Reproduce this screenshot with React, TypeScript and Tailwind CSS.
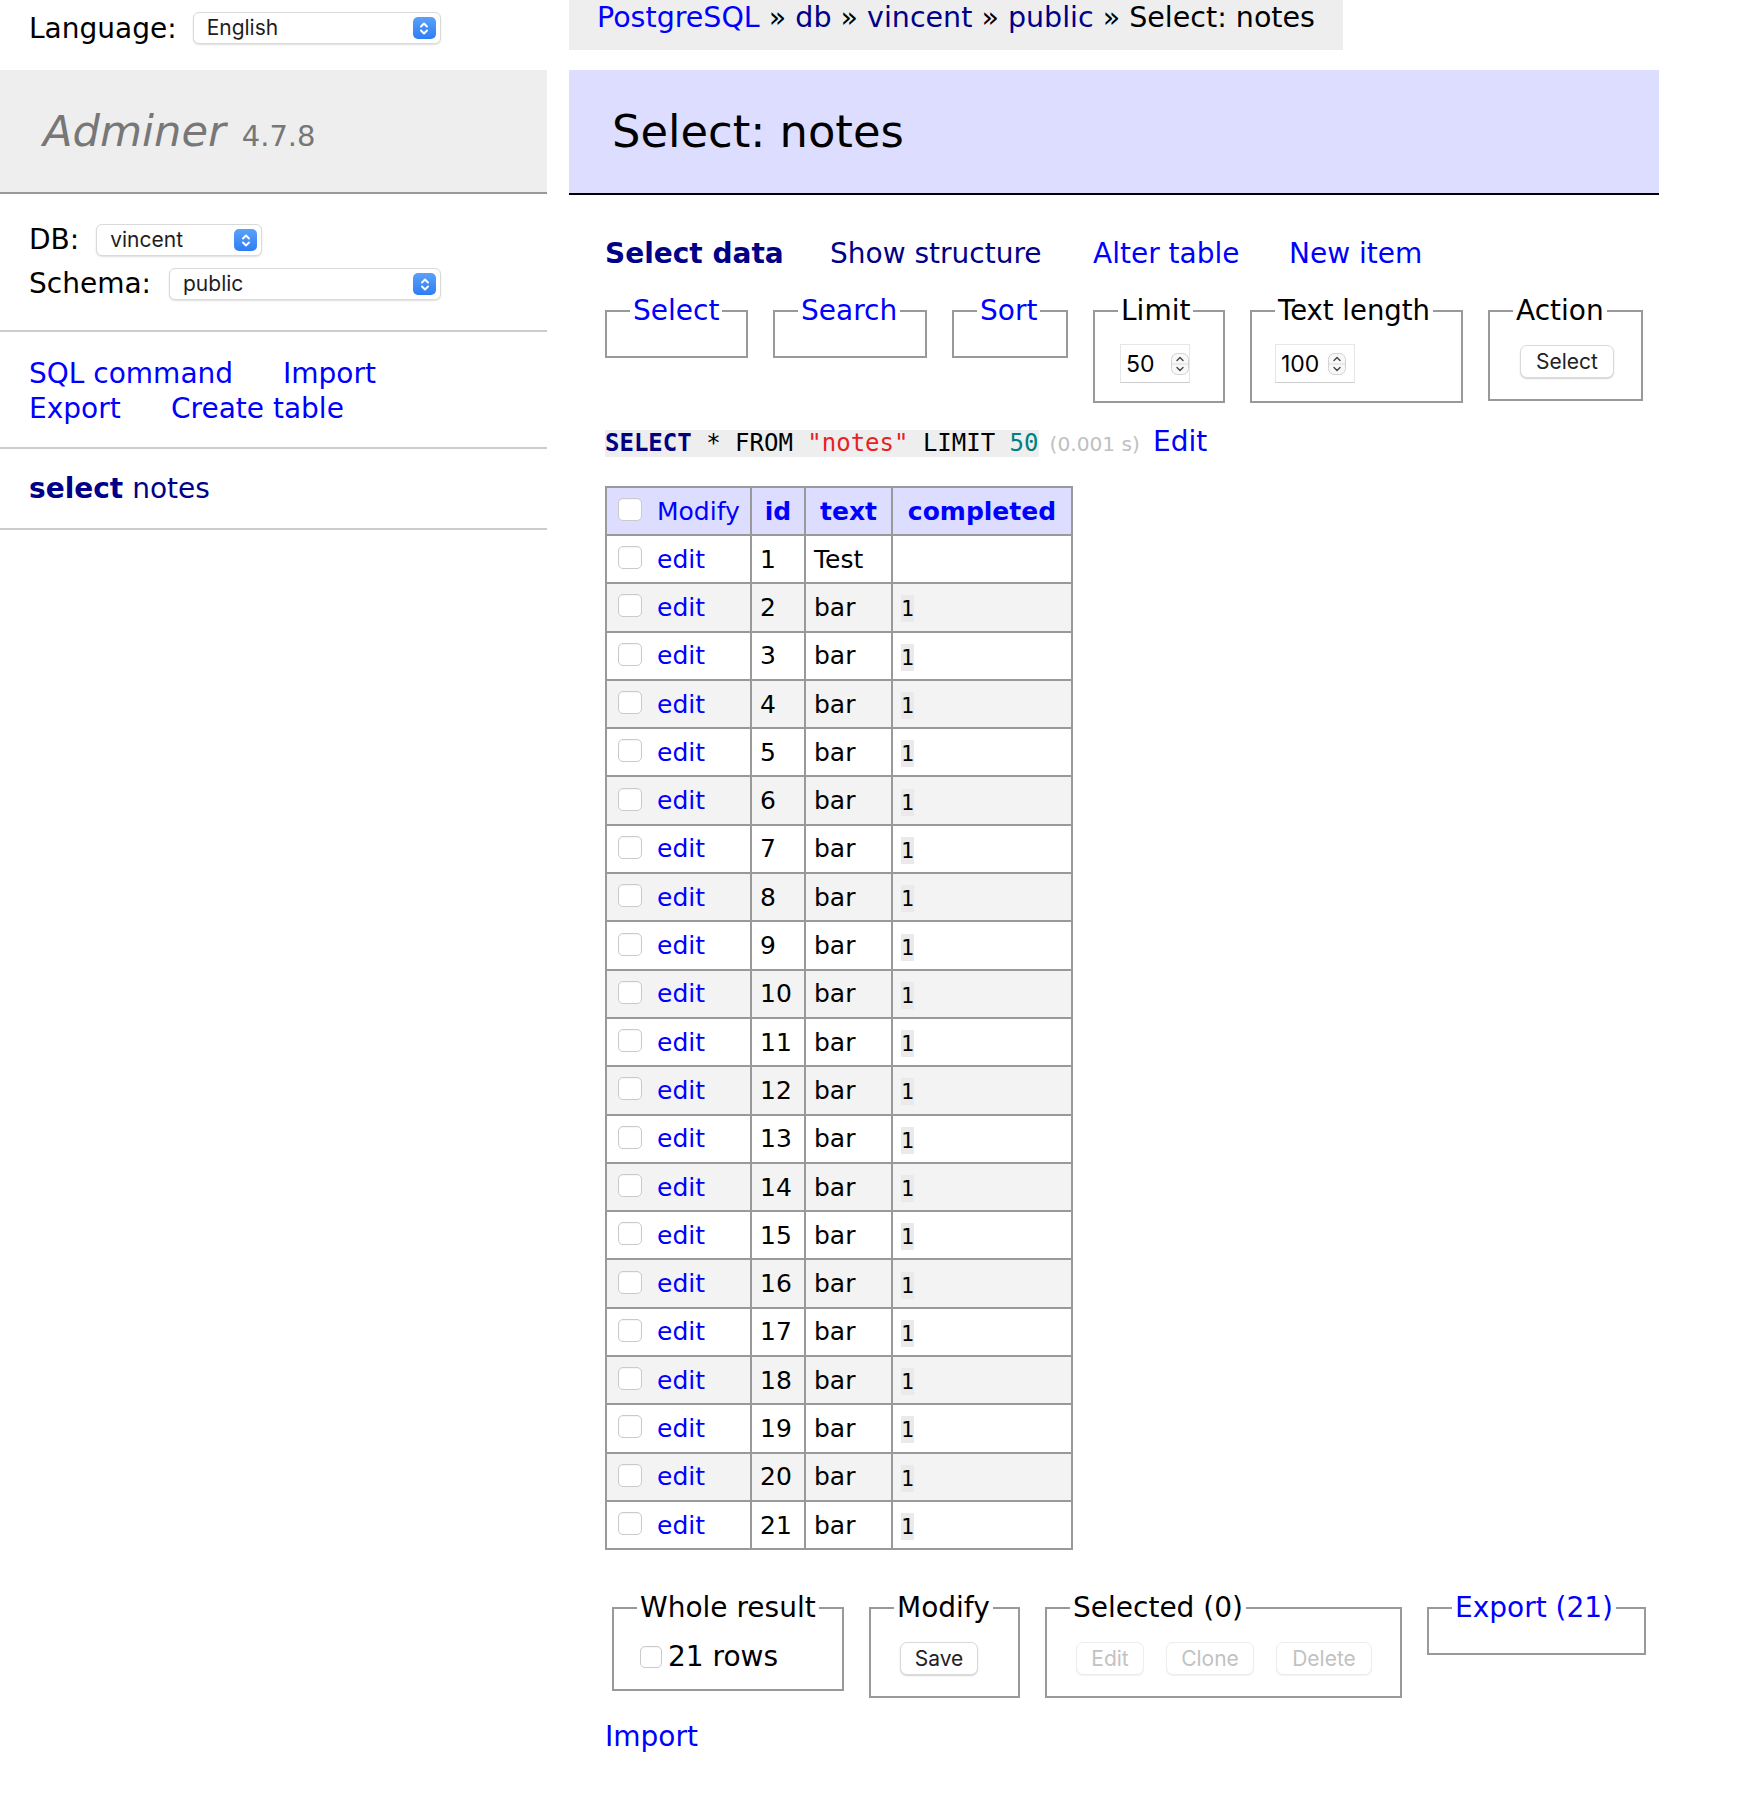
import React from "react";

function SelectArrows() {
  return (
    <span className="ml-auto flex h-[22px] w-[23px] shrink-0 items-center justify-center rounded-[5px] bg-linear-to-b from-[#5aa1f9] to-[#2d7df5]">
      <svg width="10" height="15" viewBox="0 0 10 15" fill="none" stroke="white" strokeWidth="1.9" strokeLinecap="round" strokeLinejoin="round">
        <path d="M2 5.5 L5 2.5 L8 5.5" />
        <path d="M2 9.5 L5 12.5 L8 9.5" />
      </svg>
    </span>
  );
}

function MacSelect({ value, className }: { value: string; className: string }) {
  return (
    <div
      className={`flex h-[32px] items-center rounded-[6px] border border-[#dadada] bg-white pl-[13px] pr-[4px] font-['Inter',sans-serif] text-[21px] leading-[26px] text-[#1e1e1e] shadow-[0_1px_2px_rgba(0,0,0,0.13)] ${className}`}
    >
      <span>{value}</span>
      <SelectArrows />
    </div>
  );
}

function Spinner() {
  return (
    <svg width="18" height="22" viewBox="0 0 18 22" className="shrink-0">
      <rect x="0.5" y="0.5" width="17" height="21" rx="6" fill="#f8f8f8" stroke="#d2d2d2" />
      <line x1="1" y1="11" x2="17" y2="11" stroke="#dcdcdc" />
      <path d="M6 7.5 L9 4.5 L12 7.5" fill="none" stroke="#444" strokeWidth="1.4" strokeLinecap="round" strokeLinejoin="round" />
      <path d="M6 14.5 L9 17.5 L12 14.5" fill="none" stroke="#444" strokeWidth="1.4" strokeLinecap="round" strokeLinejoin="round" />
    </svg>
  );
}

function NumInput({ value, className }: { value: string; className: string }) {
  return (
    <div
      className={`flex h-[39px] items-center border border-[#e6e6e6] border-b-[#cdcdcd] bg-white pl-[5px] font-['Inter',sans-serif] text-[23px] text-black ${className}`}
    >
      <span className="w-[47px]">{value}</span>
      <Spinner />
    </div>
  );
}

function MacButton({ label, disabled, className }: { label: string; disabled?: boolean; className: string }) {
  return (
    <div
      className={`flex h-[33px] items-center justify-center rounded-[7px] border bg-white font-['Inter',sans-serif] text-[21px] ${
        disabled
          ? "border-[#ededed] text-[#c2c2c2] shadow-[0_1px_1px_rgba(0,0,0,0.06)]"
          : "border-[#d9d9d9] text-[#222] shadow-[0_1px_1.5px_rgba(0,0,0,0.18)]"
      } ${className}`}
    >
      {label}
    </div>
  );
}

function Checkbox({ className }: { className: string }) {
  return (
    <span
      className={`inline-block h-[23px] w-[24px] shrink-0 rounded-[5px] border border-[#cacaca] bg-white shadow-[inset_0_1px_1px_rgba(0,0,0,0.04)] ${className}`}
    />
  );
}

const rows = Array.from({ length: 21 }, (_, i) => i + 1);

export default function App() {
  return (
    <div className="min-h-[1808px] w-[1754px] bg-white font-['DejaVu_Sans',Verdana,sans-serif] text-[28px] leading-[36px] text-black">
      <div className="flex items-start">
        {/* Sidebar */}
        <div className="w-[547px] shrink-0">
          <div className="h-[70px] pl-[29px] pt-[12px]">
            <div className="flex h-[32px] items-center gap-[16px]">
              <span className="mt-[2px]">Language:</span>
              <MacSelect value="English" className="w-[248px]" />
            </div>
          </div>
          <div className="flex h-[124px] items-center border-b-2 border-[#999] bg-[#eee] pl-[43px]">
            <div className="flex items-baseline text-[#777]">
              <span className="text-[43.2px] italic leading-[54px]">Adminer</span>
              <span className="ml-[16px] text-[29px]">4.7.8</span>
            </div>
          </div>
          <div className="border-b-2 border-[#ccc] px-[29px] pb-[24px] pt-[24px]">
            <div className="flex h-[44px] items-center gap-[17px]">
              <span>DB:</span>
              <MacSelect value="vincent" className="w-[166px]" />
            </div>
            <div className="flex h-[44px] items-center gap-[18px]">
              <span>Schema:</span>
              <MacSelect value="public" className="w-[272px]" />
            </div>
          </div>
          <div className="border-b-2 border-[#ccc] px-[29px] pb-[21px] pt-[25px] leading-[34.5px] text-[#0000ff]">
            <div className="flex">
              <span className="w-[254px]">SQL command</span>
              <span>Import</span>
            </div>
            <div className="flex">
              <span className="w-[142px]">Export</span>
              <span>Create table</span>
            </div>
          </div>
          <div className="border-b-2 border-[#ccc] px-[29px] pb-[21px] pt-[22px] text-[#000088]">
            <b>select</b> notes
          </div>
        </div>

        {/* Main */}
        <div className="ml-[22px] w-[1090px]">
          <div className="flex">
            <div className="h-[50px] whitespace-pre bg-[#eee] px-[28px] text-[28.5px] leading-[36px]">
              <span className="text-[#0000ff]">PostgreSQL</span>
              {" » "}
              <span className="text-[#000088]">db</span>
              {" » "}
              <span className="text-[#000088]">vincent</span>
              {" » "}
              <span className="text-[#000088]">public</span>
              {" » Select: notes"}
            </div>
          </div>
          <div className="mt-[20px] flex h-[125px] items-center border-b-2 border-black bg-[#ddf] pl-[43px] text-[44.8px] leading-[54px]">
            Select: notes
          </div>

          <div className="pl-[36px]">
            {/* tabs */}
            <div className="mt-[41px] flex h-[36px]">
              <span className="w-[225px] font-bold text-[#000088]">Select data</span>
              <span className="w-[263px] text-[#000088]">Show structure</span>
              <span className="w-[196px] text-[#0000ff]">Alter table</span>
              <span className="text-[#0000ff]">New item</span>
            </div>

            {/* fieldsets */}
            <div className="mt-[21px] flex items-start gap-[25px]">
              <fieldset className="w-[143px] border-2 border-[#999] px-[23px] py-[14px]">
                <legend className="px-[3px] leading-[35px] text-[#0000ff]">Select</legend>
              </fieldset>
              <fieldset className="w-[154px] border-2 border-[#999] px-[23px] py-[14px]">
                <legend className="px-[3px] leading-[35px] text-[#0000ff]">Search</legend>
              </fieldset>
              <fieldset className="w-[116px] border-2 border-[#999] px-[23px] py-[14px]">
                <legend className="px-[3px] leading-[35px] text-[#0000ff]">Sort</legend>
              </fieldset>
              <fieldset className="w-[132px] border-2 border-[#999] px-[23px] py-[14px]">
                <legend className="px-[3px] leading-[35px]">Limit</legend>
                <div className="h-[45px] pl-[2px] pt-[2px]">
                  <NumInput value="50" className="w-[70px]" />
                </div>
              </fieldset>
              <fieldset className="w-[213px] border-2 border-[#999] px-[23px] py-[14px]">
                <legend className="px-[3px] text-[27.5px] leading-[35px]">Text length</legend>
                <div className="h-[45px] pt-[2px]">
                  <NumInput value="100" className="w-[80px]" />
                </div>
              </fieldset>
              <fieldset className="w-[155px] border-2 border-[#999] px-[23px] py-[14px]">
                <legend className="px-[3px] leading-[35px]">Action</legend>
                <div className="h-[43px] pl-[7px] pt-[3px]">
                  <MacButton label="Select" className="w-[94px]" />
                </div>
              </fieldset>
            </div>

            {/* SQL */}
            <div className="mt-[21px] flex h-[36px] items-baseline whitespace-pre">
              <code className="inline-block bg-[#eee] font-['DejaVu_Sans_Mono',monospace] text-[24px] leading-[27px]">
                <span className="font-bold text-[#000080]">SELECT</span>
                {" * FROM "}
                <span className="text-[#e62222]">"notes"</span>
                {" LIMIT "}
                <span className="text-[#008080]">50</span>
              </code>
              <span className="ml-[11px] text-[20.2px] text-[#c0c0c0]">(0.001 s)</span>
              <span className="ml-[13px] text-[#0000ff]">Edit</span>
            </div>

            {/* Table */}
            <table className="mt-[26px] border-separate border-spacing-0 border-l-2 border-t-2 border-[#999] text-[25px] leading-[31px]">
              <thead>
                <tr className="bg-[#ddf]">
                  <td className="h-[48px] w-[145px] border-b-2 border-r-2 border-[#999] p-0">
                    <div className="flex items-center pl-[11px]">
                      <Checkbox className="-mt-[3px]" />
                      <span className="ml-[15px] text-[#0000ff]">Modify</span>
                    </div>
                  </td>
                  <th className="h-[48px] w-[54px] border-b-2 border-r-2 border-[#999] p-0 text-center font-bold text-[#0000ff]">id</th>
                  <th className="h-[48px] w-[87px] border-b-2 border-r-2 border-[#999] p-0 text-center font-bold text-[#0000ff]">text</th>
                  <th className="h-[48px] w-[180px] border-b-2 border-r-2 border-[#999] p-0 text-center font-bold text-[#0000ff]">completed</th>
                </tr>
              </thead>
              <tbody>
                {rows.map((n) => (
                  <tr key={n} className={n % 2 === 0 ? "bg-[#f3f3f3]" : "bg-white"}>
                    <td className="h-[48.3px] border-b-2 border-r-2 border-[#999] p-0">
                      <div className="flex items-center pl-[11px]">
                        <Checkbox className="-mt-[3px]" />
                        <span className="ml-[15px] text-[#0000ff]">edit</span>
                      </div>
                    </td>
                    <td className="h-[48.3px] border-b-2 border-r-2 border-[#999] py-0 pl-[8px] pr-[6px]">{n}</td>
                    <td className="h-[48.3px] border-b-2 border-r-2 border-[#999] py-0 pl-[8px] pr-[6px]">{n === 1 ? "Test" : "bar"}</td>
                    <td className="h-[48.3px] border-b-2 border-r-2 border-[#999] py-0 pl-[8px] pr-[6px]">
                      {n === 1 ? null : (
                        <code className="inline-block bg-[#eaeaea] align-middle font-['DejaVu_Sans_Mono',monospace] text-[21.4px] leading-[27px]">1</code>
                      )}
                    </td>
                  </tr>
                ))}
              </tbody>
            </table>

            {/* Bottom fieldsets */}
            <div className="ml-[7px] mt-[40px] flex items-start gap-[25px]">
              <fieldset className="w-[232px] border-2 border-[#999] px-[23px] py-[14px]">
                <legend className="px-[3px] leading-[35px]">Whole result</legend>
                <div className="flex h-[36px] items-center">
                  <Checkbox className="!h-[22px] !w-[22px] ml-[3px]" />
                  <span className="ml-[6px]">21 rows</span>
                </div>
              </fieldset>
              <fieldset className="w-[151px] border-2 border-[#999] px-[23px] py-[14px]">
                <legend className="px-[3px] leading-[35px]">Modify</legend>
                <div className="h-[43px] pl-[6px] pt-[3px]">
                  <MacButton label="Save" className="w-[78px]" />
                </div>
              </fieldset>
              <fieldset className="w-[357px] border-2 border-[#999] px-[23px] py-[14px]">
                <legend className="px-[3px] leading-[35px]">Selected (0)</legend>
                <div className="flex h-[43px] items-start gap-[22px] pl-[6px] pt-[3px]">
                  <MacButton label="Edit" disabled className="w-[68px]" />
                  <MacButton label="Clone" disabled className="w-[88px]" />
                  <MacButton label="Delete" disabled className="w-[96px]" />
                </div>
              </fieldset>
              <fieldset className="w-[219px] border-2 border-[#999] px-[23px] py-[14px]">
                <legend className="px-[3px] leading-[35px] text-[#0000ff]">Export (21)</legend>
              </fieldset>
            </div>

            <div className="mt-[21px] text-[#0000ff]">Import</div>
          </div>
        </div>
      </div>
    </div>
  );
}
